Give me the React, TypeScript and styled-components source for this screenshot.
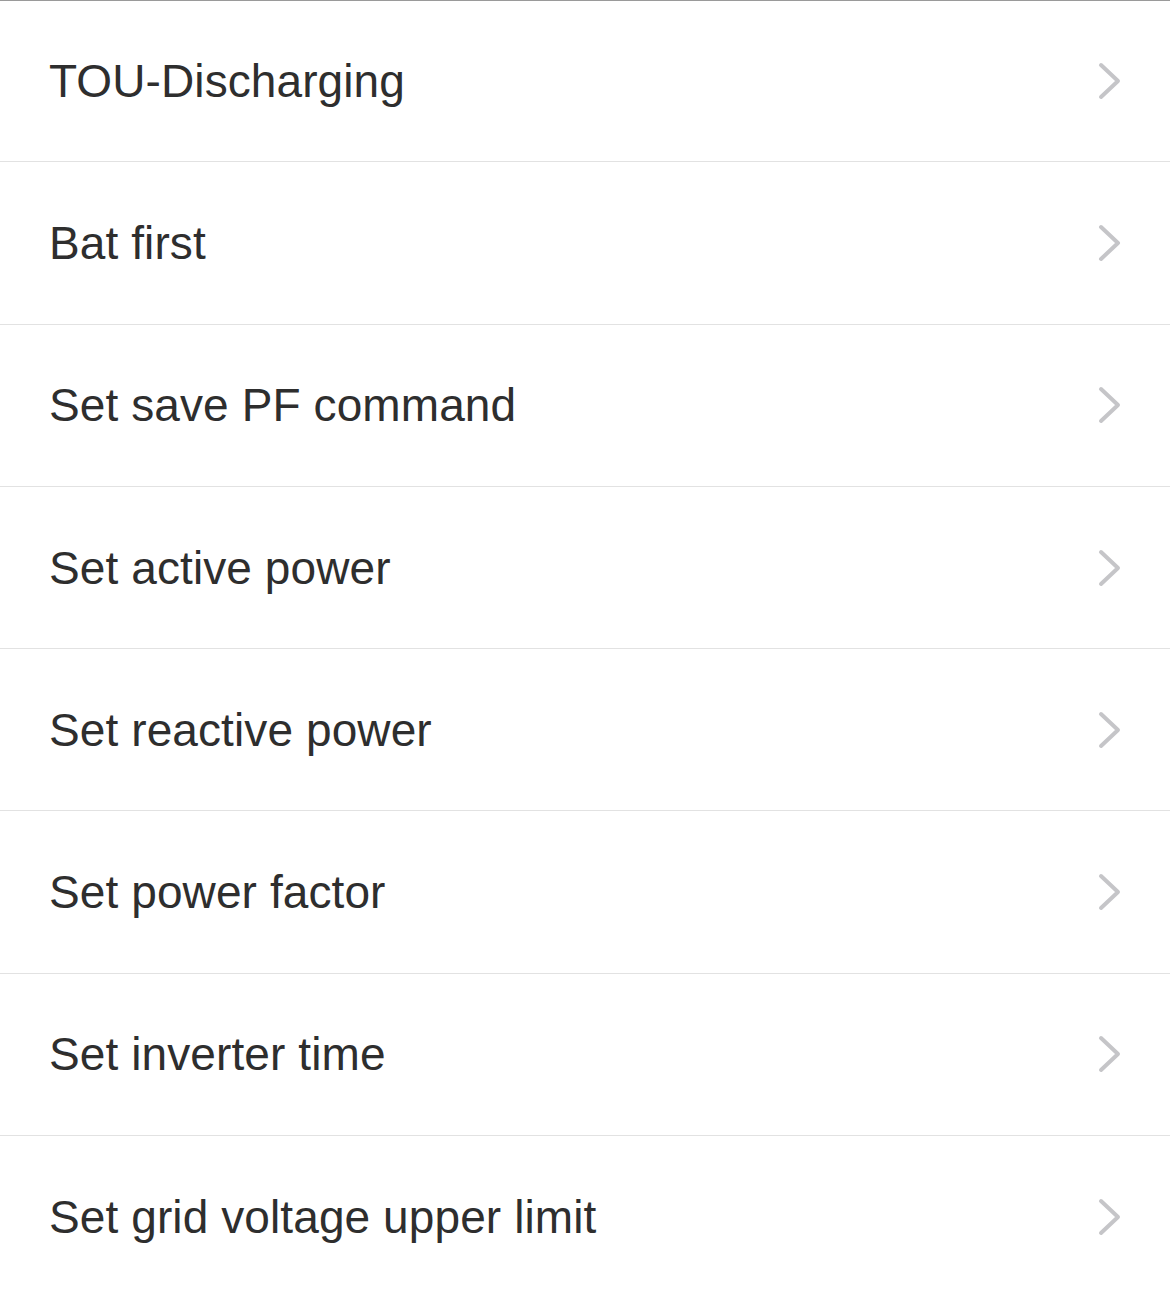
import React from "react";
import styled, { createGlobalStyle } from "styled-components";

const GlobalStyle = createGlobalStyle`
  html, body {
    margin: 0;
    padding: 0;
    background: #ffffff;
  }
  body {
    font-family: "Liberation Sans", Arial, sans-serif;
  }
`;

const List = styled.ul`
  list-style: none;
  margin: 0;
  padding: 0;
  border-top: 1px solid #9a9a9a;
  background: #ffffff;
`;

const Row = styled.li`
  box-sizing: border-box;
  height: 162.3px;
  display: flex;
  align-items: center;
  justify-content: space-between;
  padding: 0 48px 0 49px;
  border-bottom: 1px solid #e2e2e2;

  &:first-child {
    height: 161.3px;
  }
`;

const Label = styled.span`
  font-size: 46px;
  color: #2e2e2e;
  letter-spacing: 0.1px;
`;

const Chevron = styled.svg`
  width: 24px;
  height: 38px;
  flex-shrink: 0;
`;

const items = [
  "TOU-Discharging",
  "Bat first",
  "Set save PF command",
  "Set active power",
  "Set reactive power",
  "Set power factor",
  "Set inverter time",
  "Set grid voltage upper limit",
];

function App() {
  return (
    <>
      <GlobalStyle />
      <List>
        {items.map((item) => (
          <Row key={item}>
            <Label>{item}</Label>
            <Chevron viewBox="0 0 24 38">
              <path
                d="M3 3 L20 19 L3 35"
                fill="none"
                stroke="#c5c5c8"
                strokeWidth="4"
                strokeLinecap="round"
                strokeLinejoin="round"
              />
            </Chevron>
          </Row>
        ))}
      </List>
    </>
  );
}

export default App;
